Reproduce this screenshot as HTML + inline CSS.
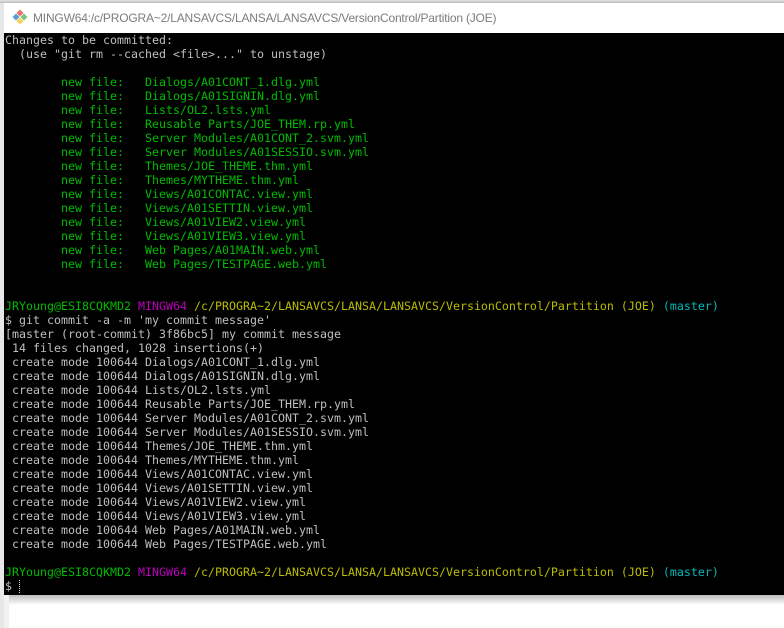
<!DOCTYPE html>
<html><head><meta charset="utf-8">
<style>
html,body{margin:0;padding:0;background:#fff;}
body{width:784px;height:628px;position:relative;overflow:hidden;}
#top{position:absolute;left:0;top:0;width:784px;height:3px;background:linear-gradient(#e4e4e4,#bdbdbd);}
#left{position:absolute;left:0;top:3px;width:4px;height:625px;background:#e6e7e8;}
#lefta{position:absolute;left:4px;top:595px;width:5px;height:33px;background:#f1f1f1;}
#title{position:absolute;left:4px;top:3px;width:780px;height:30px;background:#fff;}
#tt{position:absolute;left:33px;top:9px;font:12px/18px "Liberation Sans",sans-serif;letter-spacing:-.19px;color:#7c7c7c;white-space:nowrap;}
#icon{position:absolute;left:12px;top:9px;}
#term{position:absolute;left:4px;top:33px;width:780px;height:562px;background:#000;}
#shadow{position:absolute;left:4px;top:595px;width:780px;height:10px;background:linear-gradient(#bdbdbd,#fff);}
pre{position:absolute;left:5px;top:33px;margin:0;font:11.63px/14px "DejaVu Sans Mono",monospace;color:#bfbfbf;white-space:pre;}
.g{color:#00bb00}.m{color:#bb00bb}.y{color:#bbbb00}.c{color:#00bbbb}
#cur{position:absolute;left:19px;top:580px;width:1px;height:13px;background:repeating-linear-gradient(#ddd 0,#ddd 1px,#000 1px,#000 2px);}
</style></head>
<body>
<div id="top"></div>
<div id="left"></div>
<div id="shadow"></div>
<div id="lefta"></div>
<div id="title"></div>
<svg id="icon" width="16" height="16" viewBox="0 0 16 16">
<polygon points="8,0.5 11.5,4 8,7.5 4.5,4" fill="#e8716a"/>
<polygon points="4,4.5 7.5,8 4,11.5 0.5,8" fill="#5b9bd5"/>
<polygon points="12,4.5 15.5,8 12,11.5 8.5,8" fill="#7cc47c"/>
<polygon points="8,8.5 11.5,12 8,15.5 4.5,12" fill="#f2d35e"/>
</svg>
<div id="tt">MINGW64:/c/PROGRA~2/LANSAVCS/LANSA/LANSAVCS/VersionControl/Partition (JOE)</div>
<div id="term"></div>
<pre>Changes to be committed:
  (use "git rm --cached &lt;file&gt;..." to unstage)

<span class="g">        new file:   Dialogs/A01CONT_1.dlg.yml
        new file:   Dialogs/A01SIGNIN.dlg.yml
        new file:   Lists/OL2.lsts.yml
        new file:   Reusable Parts/JOE_THEM.rp.yml
        new file:   Server Modules/A01CONT_2.svm.yml
        new file:   Server Modules/A01SESSIO.svm.yml
        new file:   Themes/JOE_THEME.thm.yml
        new file:   Themes/MYTHEME.thm.yml
        new file:   Views/A01CONTAC.view.yml
        new file:   Views/A01SETTIN.view.yml
        new file:   Views/A01VIEW2.view.yml
        new file:   Views/A01VIEW3.view.yml
        new file:   Web Pages/A01MAIN.web.yml
        new file:   Web Pages/TESTPAGE.web.yml</span>


<span class="g">JRYoung@ESI8CQKMD2</span> <span class="m">MINGW64</span> <span class="y">/c/PROGRA~2/LANSAVCS/LANSA/LANSAVCS/VersionControl/Partition (JOE)</span> <span class="c">(master)</span>
$ git commit -a -m 'my commit message'
[master (root-commit) 3f86bc5] my commit message
 14 files changed, 1028 insertions(+)
 create mode 100644 Dialogs/A01CONT_1.dlg.yml
 create mode 100644 Dialogs/A01SIGNIN.dlg.yml
 create mode 100644 Lists/OL2.lsts.yml
 create mode 100644 Reusable Parts/JOE_THEM.rp.yml
 create mode 100644 Server Modules/A01CONT_2.svm.yml
 create mode 100644 Server Modules/A01SESSIO.svm.yml
 create mode 100644 Themes/JOE_THEME.thm.yml
 create mode 100644 Themes/MYTHEME.thm.yml
 create mode 100644 Views/A01CONTAC.view.yml
 create mode 100644 Views/A01SETTIN.view.yml
 create mode 100644 Views/A01VIEW2.view.yml
 create mode 100644 Views/A01VIEW3.view.yml
 create mode 100644 Web Pages/A01MAIN.web.yml
 create mode 100644 Web Pages/TESTPAGE.web.yml

<span class="g">JRYoung@ESI8CQKMD2</span> <span class="m">MINGW64</span> <span class="y">/c/PROGRA~2/LANSAVCS/LANSA/LANSAVCS/VersionControl/Partition (JOE)</span> <span class="c">(master)</span>
$ </pre>
<div id="cur"></div>
</body></html>
